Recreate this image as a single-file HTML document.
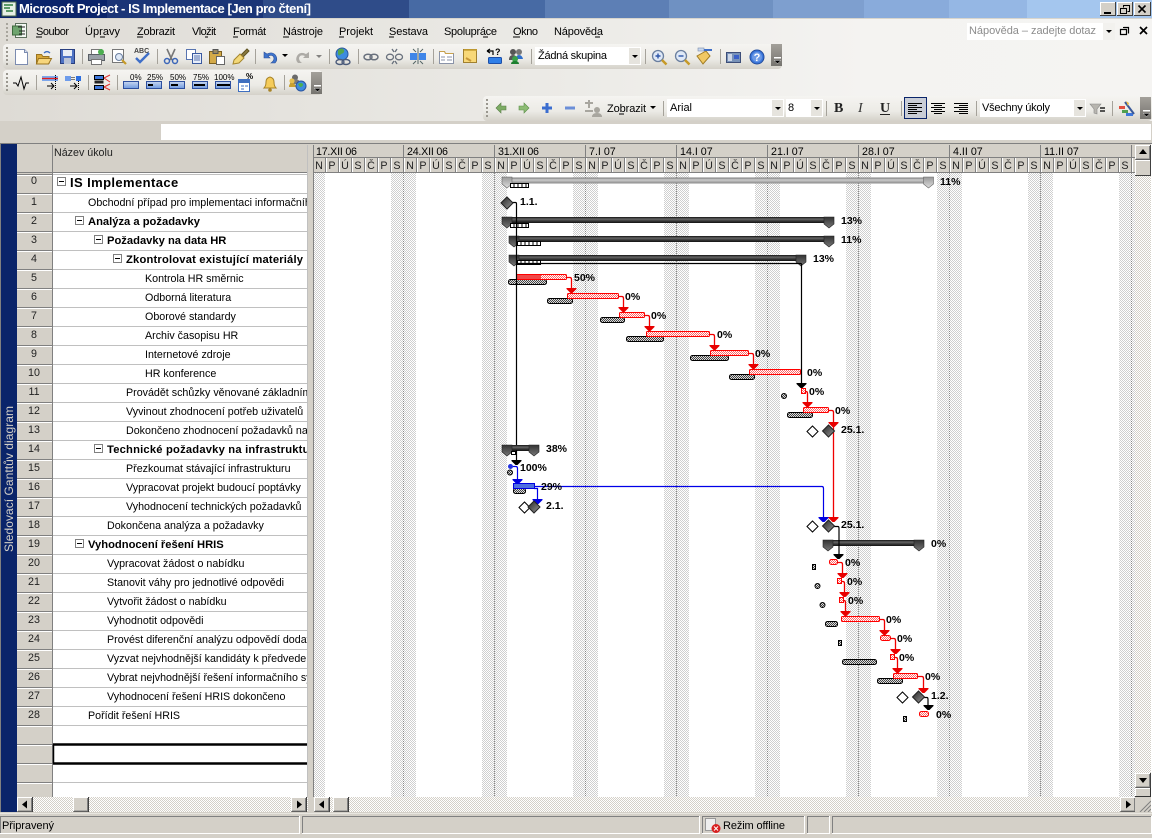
<!DOCTYPE html>
<html><head><meta charset="utf-8"><title>Microsoft Project</title>
<style>
html,body{margin:0;padding:0;background:#d4d0c8;overflow:hidden}
svg{display:block}
text{font-family:"Liberation Sans",sans-serif;font-size:10.7px;fill:#000;white-space:pre}
.m{font-size:11px}
.n{text-anchor:middle;fill:#222}
.bd{font-weight:bold;font-size:11.2px}
.p{font-weight:bold;font-size:10.5px}
.r{fill:url(#rh);stroke:#f00}
.b{fill:url(#bh);stroke:#000}
.l{fill:none;stroke:#f00000;stroke-width:1.3}
.k{fill:none;stroke:#000;stroke-width:1.2}
.u{fill:none;stroke:#0000e8;stroke-width:1.2}
.s{stroke:#a5a29a;stroke-width:1}
</style></head><body>
<svg width="1152" height="838" viewBox="0 0 1152 838" xmlns="http://www.w3.org/2000/svg">
<defs>
<pattern id="wk" width="2" height="2" patternUnits="userSpaceOnUse"><rect width="2" height="2" fill="#fff"/><rect width="1" height="1" fill="#cfcfcf"/><rect x="1" y="1" width="1" height="1" fill="#cfcfcf"/></pattern>
<pattern id="tr" width="2" height="2" patternUnits="userSpaceOnUse"><rect width="2" height="2" fill="#fff"/><rect width="1" height="1" fill="#d4d0c8"/><rect x="1" y="1" width="1" height="1" fill="#d4d0c8"/></pattern>
<pattern id="rh" width="2" height="2" patternUnits="userSpaceOnUse"><rect width="2" height="2" fill="#fff"/><rect width="1" height="1" fill="#f66"/><rect x="1" y="1" width="1" height="1" fill="#f66"/></pattern>
<pattern id="bh" width="2" height="2" patternUnits="userSpaceOnUse"><rect width="2" height="2" fill="#ddd"/><rect width="1" height="1" fill="#444"/><rect x="1" y="1" width="1" height="1" fill="#444"/></pattern>
<pattern id="dy" x="312" width="13" height="14" patternUnits="userSpaceOnUse"><rect width="13" height="14" fill="#d4d0c8"/><rect width="1" height="14" fill="#808080"/><rect x="1" width="1" height="14" fill="#fff"/></pattern>
<pattern id="rw" y="175" width="10" height="19" patternUnits="userSpaceOnUse"><rect width="10" height="19" fill="#fff"/><rect y="18" width="10" height="1" fill="#c0c0c0"/></pattern>
<pattern id="rn" y="175" width="10" height="19" patternUnits="userSpaceOnUse"><rect width="10" height="19" fill="#d4d0c8"/><rect y="18" width="10" height="1" fill="#808080"/><rect y="0" width="10" height="1" fill="#fff"/></pattern>
<linearGradient id="dk" x1="0" y1="0" x2="0" y2="1"><stop offset="0" stop-color="#111"/><stop offset=".35" stop-color="#666"/><stop offset=".7" stop-color="#333"/><stop offset="1" stop-color="#111"/></linearGradient>
<linearGradient id="gy" x1="0" y1="0" x2="0" y2="1"><stop offset="0" stop-color="#777"/><stop offset=".4" stop-color="#ccc"/><stop offset="1" stop-color="#888"/></linearGradient>
<linearGradient id="cp" x1="0" y1="0" x2="0" y2="1"><stop offset="0" stop-color="#333"/><stop offset="1" stop-color="#777"/></linearGradient>
<linearGradient id="cg" x1="0" y1="0" x2="0" y2="1"><stop offset="0" stop-color="#999"/><stop offset="1" stop-color="#ddd"/></linearGradient>
<linearGradient id="dm" x1="0" y1="0" x2="1" y2="1"><stop offset="0" stop-color="#222"/><stop offset="1" stop-color="#999"/></linearGradient>
<linearGradient id="bg" x1="0" y1="0" x2="1" y2="0"><stop offset="0" stop-color="#dedbd5"/><stop offset=".5" stop-color="#ecebe7"/><stop offset=".75" stop-color="#f4f3f1"/><stop offset="1" stop-color="#f5f4f2"/></linearGradient>
<linearGradient id="pl" x1="0" y1="0" x2="0" y2="1"><stop offset="0" stop-color="#f5f4f1"/><stop offset=".6" stop-color="#ecebe6"/><stop offset="1" stop-color="#d4d1c9"/></linearGradient>
<linearGradient id="ch" x1="0" y1="0" x2="0" y2="1"><stop offset="0" stop-color="#a3a09a"/><stop offset="1" stop-color="#76746f"/></linearGradient>
<linearGradient id="pb" x1="0" y1="0" x2="0" y2="1"><stop offset="0" stop-color="#c9d8f0"/><stop offset="1" stop-color="#6f9ae0"/></linearGradient>
<g id="cap"><polygon points="0,0 10,0 10,7 5,11 0,7" fill="url(#cp)" stroke="#222" stroke-width=".6"/></g>
<g id="cg0"><polygon points="0,0 10,0 10,7 5,11 0,7" fill="url(#cg)" stroke="#666" stroke-width=".6"/></g>
<g id="ar"><polygon points="-5,0 5,0 5,1 1,5 -1,5 -5,1"/></g>
<g id="dd"><polygon points="-6,0 0,-6 6,0 0,6" fill="url(#dm)" stroke="#222"/></g>
<g id="wd"><polygon points="-5.5,0 0,-5.5 5.5,0 0,5.5" fill="#fff" stroke="#000"/></g>
<g id="ro"><rect x=".5" y=".5" width="18" height="4" fill="#fff" stroke="#000"/><path d="M4 1v3M8 1v3M12 1v3M16 1v3" stroke="#000"/></g>
<g id="ro2"><rect x=".5" y=".5" width="23" height="4" fill="#fff" stroke="#000"/><path d="M4 1v3M8 1v3M12 1v3M16 1v3M20 1v3" stroke="#000"/></g>
<g id="mn"><rect x=".5" y=".5" width="8" height="8" fill="#fff" stroke="#808080"/><path d="M2 4.5h5" stroke="#000"/></g>
<g id="bt"><rect width="16" height="15" fill="#d4d0c8"/><path d="M.5 14V.5H15" stroke="#fff" fill="none"/><path d="M15.5 0V15H0" stroke="#404040" fill="none"/><path d="M14.5 1V14H1" stroke="#808080" fill="none"/></g>
<g id="gr"><path d="M0 0h2v2H0zM0 4h2v2H0zM0 8h2v2H0zM0 12h2v2H0zM0 16h2v2H0z" fill="#9a978f"/></g>
<g id="pc"><rect x="0" y="0" width="11" height="22" fill="url(#ch)"/><rect x="3" y="13" width="7" height="1.5" fill="#fff"/><polygon points="3,16 10,16 6.5,20" fill="#fff"/><polygon points="3.5,16.5 9.5,16.5 6.5,19.5" fill="#000"/></g>
<g id="dn"><polygon points="0,0 6,0 3,3" fill="#000"/></g>
<g id="mg"><circle cx="7" cy="7" r="5.5" fill="#dfe9f7" stroke="#6a7f9f" stroke-width="1.3"/><path d="M11 11l4.500 4.500" stroke="#c69a28" stroke-width="2.500"/></g>
<g id="pg"><rect x="1.500" y="5.500" width="15" height="7" fill="url(#pb)" stroke="#2d4f9e"/></g>
</defs>

<!-- background -->
<rect width="1152" height="838" fill="#d4d0c8"/>
<rect y="18" width="1152" height="103" fill="url(#bg)"/>
<rect y="18" width="1152" height="1" fill="#d8d5cd"/>

<!-- title -->
<rect x="0" width="107" height="18" fill="#0a246a"/>
<rect x="107" width="156" height="18" fill="#1b3577"/>
<rect x="263" width="146" height="18" fill="#2f4c89"/>
<rect x="409" width="136" height="18" fill="#476aa4"/>
<rect x="545" width="124" height="18" fill="#5d7fb5"/>
<rect x="669" width="104" height="18" fill="#6f91c2"/>
<rect x="773" width="91" height="18" fill="#7e9fcf"/>
<rect x="864" width="85" height="18" fill="#89abdb"/>
<rect x="949" width="78" height="18" fill="#95b7e4"/>
<rect x="1027" width="125" height="18" fill="#a4c6ee"/>
<rect x="2" y="2" width="14" height="14" fill="#e6efe6" stroke="#4a6a4a"/><path d="M4 5h9M4 8h6M6 11h7" stroke="#2f7f3f" stroke-width="1.500"/>
<text x="19" y="13" class="bd" style="font-size:13px;fill:#fff" textLength="292" lengthAdjust="spacing">Microsoft Project - IS Implementace [Jen pro čtení]</text>
<g transform="translate(1100,2)"><rect width="16" height="14" fill="#d4d0c8"/><path d="M.5 14V.5H16" stroke="#fff" fill="none"/><path d="M15.500 0V13.500H0" stroke="#404040" fill="none"/><rect x="4" y="10" width="7" height="2" fill="#000"/></g>
<g transform="translate(1117,2)"><rect width="16" height="14" fill="#d4d0c8"/><path d="M.5 14V.5H16" stroke="#fff" fill="none"/><path d="M15.500 0V13.500H0" stroke="#404040" fill="none"/><path d="M6.500 3.500h6v6h-2M6.500 3.500v2" fill="none" stroke="#000"/><path d="M3.500 6.500h6v5h-6z" fill="none" stroke="#000"/><path d="M6 3.500h7M3 6.500h7" stroke="#000"/></g>
<g transform="translate(1134,2)"><rect width="17" height="14" fill="#d4d0c8"/><path d="M.5 14V.5H17" stroke="#fff" fill="none"/><path d="M16.500 0V13.500H0" stroke="#404040" fill="none"/><path d="M4.500 3.500l7 7M11.500 3.500l-7 7" stroke="#000" stroke-width="1.600"/></g>

<!-- menu -->
<use href="#gr" x="6" y="23" opacity=".8"/>
<g transform="translate(12,23)"><rect x="3.500" y=".5" width="11" height="14" fill="#f4f8f4" stroke="#5d6f5d"/><rect x=".5" y="3" width="9" height="9" fill="#6ea46e" stroke="#3d6a3d"/><path d="M6 4h7M7 8h6M7 11h6" stroke="#222"/></g>
<text class="m" x="36" y="35" textLength="33" lengthAdjust="spacing">Soubor</text>
<text class="m" x="85" y="35" textLength="35" lengthAdjust="spacing">Úpravy</text>
<text class="m" x="137" y="35" textLength="38" lengthAdjust="spacing">Zobrazit</text>
<text class="m" x="192" y="35" textLength="24" lengthAdjust="spacing">Vložit</text>
<text class="m" x="233" y="35" textLength="33" lengthAdjust="spacing">Formát</text>
<text class="m" x="283" y="35" textLength="40" lengthAdjust="spacing">Nástroje</text>
<text class="m" x="339" y="35" textLength="34" lengthAdjust="spacing">Projekt</text>
<text class="m" x="389" y="35" textLength="39" lengthAdjust="spacing">Sestava</text>
<text class="m" x="444" y="35" textLength="53" lengthAdjust="spacing">Spolupráce</text>
<text class="m" x="513" y="35" textLength="25" lengthAdjust="spacing">Okno</text>
<text class="m" x="554" y="35" textLength="49" lengthAdjust="spacing">Nápověda</text>
<path d="M36 37h6M100 37h5M137 37h6M205 37h3M233 37h5M283 37h6M339 37h5M389 37h5M483 37h5M513 37h7M595 37h5" stroke="#000"/>
<rect x="967" y="23" width="148" height="17" fill="#fff"/>
<text class="m" x="969" y="34" style="fill:#8c8c8c" textLength="127" lengthAdjust="spacing">Nápověda – zadejte dotaz</text>
<rect x="1103" y="23" width="12" height="17" fill="#f2f1ee"/>
<use href="#dn" x="1106" y="30"/>
<path d="M1123.500 27.500h5v6M1120.500 29.500h6v5h-6z" fill="none" stroke="#000" stroke-width="1.200"/><path d="M1123 27.500h6M1120 29.500h7" stroke="#000"/>
<path d="M1140 27l7 7M1147 27l-7 7" stroke="#000" stroke-width="1.700"/>

<!-- toolbar 1 -->
<rect x="3" y="44" width="779" height="25" rx="4" fill="url(#pl)"/>
<use href="#pc" x="771" y="44"/>
<use href="#gr" x="6" y="47"/>
<path class="s" d="M82.500 49v15M157.500 49v15M255.500 49v15M329.500 49v15M358.500 49v15M433.500 49v15M531.500 49v15M645.500 49v15M720.500 49v15"/>
<g transform="translate(13,49)"><path d="M2.500 .5h9l3 3v12h-12z" fill="#fff" stroke="#7c8cb0"/><path d="M11.500 .5v3h3" fill="#dbe4f4" stroke="#7c8cb0"/></g>
<g transform="translate(35,49)"><path d="M1.500 5.500h5l1.500 2h6v7h-12.500z" fill="#d8a838" stroke="#9a7420"/><path d="M3.500 9.500h13l-3 5.500h-12z" fill="#f7d67c" stroke="#9a7420"/><path d="M9 4q3-3 6 0" fill="none" stroke="#3f6fc0" stroke-width="1.300"/></g>
<g transform="translate(60,49)"><rect x=".5" y=".5" width="14" height="14" fill="#4f73c4" stroke="#2a3f80"/><rect x="3" y="1" width="9" height="6" fill="#e8edf5"/><rect x="4" y="9" width="7" height="6" fill="#bcc4d6"/></g>
<g transform="translate(88,49)"><rect x="3.500" y=".5" width="10" height="5" fill="#fff" stroke="#777"/><rect x=".5" y="5.500" width="16" height="6" fill="#9aa1a8" stroke="#5a5f66"/><rect x="3.500" y="10.500" width="10" height="5" fill="#fff" stroke="#777"/><circle cx="13" cy="3" r="3" fill="#4caf50"/></g>
<g transform="translate(112,49)"><rect x=".5" y=".5" width="11" height="13" fill="#fff" stroke="#777"/><circle cx="7" cy="8" r="3.500" fill="#dfe9f7" stroke="#6a7f9f"/><path d="M10 11l4 4" stroke="#c69a28" stroke-width="2.200"/></g>
<g transform="translate(134,47)"><text x="0" y="6" style="font-size:7px;font-weight:bold;fill:#444">ABC</text><path d="M2 11l4 4 9-9" fill="none" stroke="#3f6fc8" stroke-width="2.400"/></g>
<g transform="translate(163,48)"><path d="M4 1l5 11M12 1l-5 11" stroke="#777" stroke-width="1.600"/><circle cx="4" cy="13" r="2.500" fill="none" stroke="#3a65b8" stroke-width="1.500"/><circle cx="12" cy="13" r="2.500" fill="none" stroke="#3a65b8" stroke-width="1.500"/></g>
<g transform="translate(186,49)"><rect x=".5" y=".5" width="9" height="10" fill="#fff" stroke="#5874b0"/><rect x="6.500" y="4.500" width="9" height="10" fill="#e7eefa" stroke="#3a5aa0"/><path d="M8 7h6M8 9h6M8 11h6" stroke="#5874b0"/></g>
<g transform="translate(209,49)"><rect x=".5" y="2.500" width="12" height="12" fill="#d4aa48" stroke="#7c6020"/><rect x="4" y=".5" width="5" height="4" fill="#9a8a60" stroke="#555"/><rect x="7.500" y="7.500" width="8" height="8" fill="#fff" stroke="#666"/></g>
<g transform="translate(232,48)"><path d="M9 7l6-6 2 2-6 6z" fill="#8a7a40" stroke="#5f5320"/><path d="M2 12l6-6 4 4-5 5-6 1z" fill="#f3d878" stroke="#a5862c"/></g>
<g transform="translate(262,49)"><path d="M2 3l0 6 6 0-2-2q5-2 6 2q0 3-3 5h4q3-3 1-7q-3-5-9-2z" fill="#3f74cc" stroke="#2a4f98" stroke-width=".6"/></g>
<use href="#dn" x="282" y="54"/>
<g transform="translate(295,49)"><path d="M14 3l0 6-6 0 2-2q-5-2-6 2q0 3 3 5h-4q-3-3-1-7q3-5 9-2z" fill="#adaba6"/></g>
<use href="#dn" x="316" y="55" opacity=".45"/>
<g transform="translate(335,47)"><circle cx="7" cy="7" r="6" fill="#3d8be0" stroke="#2a55a0"/><path d="M3 3q4-3 6 0q1 3-3 4q-2 3-3 0z" fill="#52a552"/><ellipse cx="5" cy="15" rx="4" ry="2.500" fill="none" stroke="#4a5a7a" stroke-width="1.400"/><ellipse cx="11" cy="15" rx="4" ry="2.500" fill="none" stroke="#4a5a7a" stroke-width="1.400"/></g>
<g transform="translate(363,52)" fill="none" stroke="#68707c" stroke-width="1.500"><ellipse cx="5" cy="5" rx="4" ry="2.800"/><ellipse cx="11" cy="5" rx="4" ry="2.800"/></g>
<g transform="translate(387,48)" fill="none" stroke="#68707c" stroke-width="1.300"><ellipse cx="3" cy="9" rx="3.500" ry="2.800"/><ellipse cx="12" cy="9" rx="3.500" ry="2.800"/><path d="M5 1l2 3M10 1l-2 3M5 16l2-3M10 16l-2-3"/></g>
<g transform="translate(410,48)"><rect x="0" y="5" width="7" height="7" fill="#3f86e8"/><rect x="9" y="5" width="7" height="7" fill="#3f86e8"/><path d="M3 1l3 3M13 1l-3 3M3 16l3-3M13 16l-3-3M8 0v16" stroke="#566" fill="none"/></g>
<g transform="translate(439,49)"><path d="M.5 2.500h5l1 2h8v10H.5z" fill="#fff" stroke="#8a93a8"/><path d="M.5 2.500h5l1 2h8" fill="none" stroke="#c9a24c"/><path d="M2 8h4M8 8h5M2 11h4M8 11h5" stroke="#8a93a8"/></g>
<g transform="translate(463,49)"><rect x=".5" y=".5" width="13" height="13" fill="#f8d878" stroke="#a08030"/><path d="M1 1h13" stroke="#c8a030" stroke-width="1.500"/><path d="M3 9l5 3" stroke="#c89838" stroke-width="2"/></g>
<g transform="translate(486,47)"><rect x="2.500" y="10.500" width="13" height="6" rx="1" fill="#2f7fe8" stroke="#1c4fa8"/><path d="M1 4h6v4M1 4l3-2M1 4l3 2" fill="none" stroke="#000" stroke-width="1.200"/><text x="9" y="8" style="font-size:9px;font-weight:bold">?</text></g>
<g transform="translate(508,48)"><circle cx="5" cy="4" r="3" fill="#555"/><path d="M1 12q0-5 4-5t4 5z" fill="#555"/><circle cx="11" cy="4" r="3" fill="#777"/><path d="M8 11q0-4 3-4t4 4z" fill="#2d6fcc"/><circle cx="7" cy="11" r="3" fill="#3aa04a"/><path d="M3 16q0-3 4-3t4 3z" fill="#1d7f2f"/></g>
<rect x="535" y="47" width="106" height="18" fill="#fff"/>
<rect x="629" y="48" width="11" height="16" fill="#e6e4de"/><use href="#dn" x="632" y="55"/>
<text class="m" x="538" y="59" textLength="69" lengthAdjust="spacing">Žádná skupina</text>
<g transform="translate(651,49)"><use href="#mg"/><path d="M4.500 7h5M7 4.500v5" stroke="#2d55a8" stroke-width="1.400"/></g>
<g transform="translate(674,49)"><use href="#mg"/><path d="M4.500 7h5" stroke="#2d55a8" stroke-width="1.400"/></g>
<g transform="translate(697,48)"><path d="M0 8l9-5 4 5-7 8z" fill="#f0c864" stroke="#a07c24"/><rect x="1" y="0" width="6" height="3" fill="#c8d8f0" stroke="#7a8aa8" stroke-width=".6"/><path d="M7 2h8" stroke="#3f6fc8" stroke-width="2"/></g>
<g transform="translate(726,50)"><rect x=".5" y="2.500" width="14" height="10" fill="#7892b8" stroke="#3d4e78"/><rect x="8" y="5" width="5" height="4" fill="#3a60c8"/><rect x="2" y="4" width="4" height="7" fill="#cdd6e6"/></g>
<g transform="translate(749,49)"><circle cx="8" cy="8" r="7" fill="#3c78dc" stroke="#234c9c"/><circle cx="8" cy="8" r="5" fill="#fff" opacity=".25"/><text x="8" y="12" style="font-size:11px;font-weight:bold;fill:#fff;text-anchor:middle">?</text></g>

<!-- toolbar 2 -->
<rect x="3" y="70" width="319" height="25" rx="4" fill="url(#pl)"/>
<use href="#pc" x="311" y="72"/>
<use href="#gr" x="6" y="73"/>
<path class="s" d="M36.500 75v15M88.500 75v15M117.500 75v15M284.500 75v15"/>
<path d="M13 83h3l2 3 3-9 3 12 2-6h3" fill="none" stroke="#000"/>
<g transform="translate(42,75)"><rect x="0" y="1" width="16" height="5" fill="#7ca7ec"/><path d="M0 3.500h16" stroke="#e02020" stroke-width="1.300"/><path d="M5 11h7M9 8l3 3-3 3" fill="none" stroke="#000"/><path d="M13.500 0v16" stroke="#000" stroke-dasharray="1 1"/></g>
<g transform="translate(65,75)"><path d="M0 1h6v5H0z" fill="#6e9ceb"/><path d="M11 1h5v5h-5z" fill="#2e6fe0"/><path d="M7 2v4M9 2v4" stroke="#000" stroke-dasharray="1 1"/><path d="M5 11h7M9 8l3 3-3 3" fill="none" stroke="#000"/><path d="M13.500 6v10" stroke="#000" stroke-dasharray="1 1"/></g>
<g transform="translate(94,75)"><rect x=".5" y=".5" width="9" height="4" fill="#3f78dc" stroke="#000"/><rect x=".5" y="5.500" width="9" height="3" fill="#222"/><rect x=".5" y="10.500" width="9" height="4" fill="#3f78dc" stroke="#000"/><path d="M10 3l6-3M10 3l6 4M10 12l6-3M10 12l6 3" stroke="#e03030" fill="none"/></g>
<g transform="translate(122,76)"><use href="#pg"/><text x="8" y="4" style="font-size:8px">0%</text></g>
<g transform="translate(145,76)"><use href="#pg"/><rect x="3" y="8" width="5" height="2" fill="#000"/><text x="2" y="4" style="font-size:8px">25%</text></g>
<g transform="translate(168,76)"><use href="#pg"/><rect x="3" y="8" width="7" height="2" fill="#000"/><text x="2" y="4" style="font-size:8px">50%</text></g>
<g transform="translate(191,76)"><use href="#pg"/><rect x="3" y="8" width="11" height="2" fill="#000"/><text x="2" y="4" style="font-size:8px">75%</text></g>
<g transform="translate(214,76)"><use href="#pg"/><rect x="3" y="8" width="13" height="2" fill="#000"/><text x="0" y="4" style="font-size:8px">100%</text></g>
<g transform="translate(238,74)"><rect x=".5" y="5.500" width="11" height="12" fill="#fff" stroke="#3f6fc0"/><rect x="1" y="6" width="10" height="3" fill="#3f6fc0"/><path d="M3 12h3M7 12h3M3 15h3" stroke="#3f6fc0"/><text x="8" y="5" style="font-size:8px;font-weight:bold">%</text></g>
<g transform="translate(262,76)"><path d="M2 12q2-2 2-6t4-5q4 1 4 5t2 6z" fill="#f5cc5a" stroke="#a88428"/><circle cx="8" cy="14" r="1.800" fill="#a88428"/></g>
<g transform="translate(289,74)"><circle cx="6" cy="3.500" r="3" fill="#6a6a6a"/><path d="M1 10q0-5 5-5t5 5z" fill="#7a7a7a"/><circle cx="3" cy="7" r="2.600" fill="#e6c050"/><path d="M0 13q0-4 3-4t4 4z" fill="#c8a030"/><circle cx="12" cy="12" r="5" fill="#3d8be0" stroke="#2a55a0"/><path d="M9 10q3-2 5 0q0 3-3 3z" fill="#4caf50"/></g>

<!-- toolbar 3 -->
<rect x="483" y="96" width="669" height="25" rx="4" fill="url(#pl)"/>
<use href="#pc" x="1140" y="97"/>
<use href="#gr" x="486" y="99"/>
<path class="s" d="M663.500 101v15M826.500 101v15M901.500 101v15M976.500 101v15M1112.500 101v15"/>
<path d="M496 108l5-5v3h5v4h-5v3z" fill="#7dac64" stroke="#5a7f48" stroke-width=".6"/>
<path d="M529 108l-5-5v3h-5v4h5v3z" fill="#8dbc74" stroke="#5a8f48" stroke-width=".6"/>
<path d="M542 106.500h10v3h-10zM545.500 103h3v10h-3z" fill="#3b6ed0"/>
<rect x="565" y="106.500" width="10" height="3" fill="#6b8fd8"/>
<path d="M585 103h8M589 100v8M585 111h8" stroke="#a8a69f" stroke-width="2"/><circle cx="597" cy="110" r="3" fill="#a8a69f"/><path d="M592 117q0-4 5-4t5 4z" fill="#a8a69f"/>
<text class="m" x="607" y="112" textLength="39" lengthAdjust="spacing">Zobrazit</text><path d="M619 114h5" stroke="#000"/>
<use href="#dn" x="650" y="106"/>
<rect x="667" y="99" width="117" height="18" fill="#fff"/>
<rect x="772" y="100" width="11" height="16" fill="#e6e4de"/><use href="#dn" x="775" y="107"/>
<text class="m" x="670" y="111">Arial</text>
<rect x="786" y="99" width="37" height="18" fill="#fff"/>
<rect x="811" y="100" width="11" height="16" fill="#e6e4de"/><use href="#dn" x="814" y="107"/>
<text class="m" x="788" y="111">8</text>
<text x="834" y="112" style="font-family:'Liberation Serif',serif;font-size:14px;font-weight:bold;fill:#222">B</text>
<text x="858" y="112" style="font-family:'Liberation Serif',serif;font-size:14px;font-style:italic;fill:#333">I</text>
<text x="880" y="112" style="font-family:'Liberation Serif',serif;font-size:14px;font-weight:bold;fill:#222">U</text><path d="M880 114.500h10" stroke="#222"/>
<rect x="904.500" y="97.500" width="22" height="21" fill="#c9cdd6" stroke="#0a246a"/>
<path d="M908 103.500h14M908 105.500h9M908 107.500h14M908 109.500h9M908 111.500h14M908 113.500h9" stroke="#000"/>
<path d="M931 103.500h14M934 105.500h8M931 107.500h14M934 109.500h8M931 111.500h14M934 113.500h8" stroke="#000"/>
<path d="M954 103.500h14M959 105.500h9M954 107.500h14M959 109.500h9M954 111.500h14M959 113.500h9" stroke="#000"/>
<rect x="980" y="99" width="106" height="18" fill="#fff"/>
<rect x="1074" y="100" width="11" height="16" fill="#e6e4de"/><use href="#dn" x="1077" y="107"/>
<text class="m" x="982" y="111" textLength="68" lengthAdjust="spacing">Všechny úkoly</text>
<path d="M1090 104h11l-4 5v5l-3-1v-4z" fill="#b8b6b0" stroke="#888" stroke-width=".6"/><path d="M1100 108h5M1100 111h5" stroke="#222" stroke-width="1.500"/>
<g transform="translate(1119,100)"><rect x="0" y="6" width="6" height="3" fill="#e05040"/><rect x="3" y="10" width="6" height="3" fill="#50a050"/><rect x="7" y="13" width="7" height="3" fill="#3f78dc"/><path d="M6 2l9 12" stroke="#3a5a9a" stroke-width="2"/><path d="M7 1l3 2-1 3" fill="#f0c040"/></g>

<!-- entry bar -->
<rect x="0" y="121" width="1152" height="23" fill="#d4d0c8"/>
<rect x="161" y="124" width="990" height="16" fill="#fff"/>
<rect x="0" y="143" width="1152" height="1" fill="#808080"/>

<!-- side -->
<rect x="1" y="144" width="16" height="668" fill="#0a246a"/>
<text transform="translate(13,552) rotate(-90)" x="0" y="0" style="font-size:12px;fill:#d4d0c8" textLength="146" lengthAdjust="spacing">Sledovací Ganttův diagram</text>

<!-- table -->
<rect x="17" y="145" width="36" height="28" fill="#d4d0c8"/>
<rect x="17" y="173" width="36" height="624" fill="url(#rn)"/>
<rect x="52" y="145" width="1" height="652" fill="#808080"/>
<rect x="17" y="172" width="291" height="1" fill="#808080"/>
<rect x="53" y="173" width="254" height="624" fill="url(#rw)"/>
<rect x="53" y="145" width="255" height="27" fill="#d4d0c8"/>
<rect x="307" y="145" width="1" height="652" fill="#c0c0c0"/>
<rect x="308" y="145" width="6" height="667" fill="#d4d0c8"/>
<rect x="313" y="145" width="1" height="652" fill="#808080"/>
<text x="54" y="156" style="fill:#222">Název úkolu</text>

<text class="n" x="34" y="184">0</text><text class="n" x="34" y="205">1</text><text class="n" x="34" y="224">2</text><text class="n" x="34" y="243">3</text><text class="n" x="34" y="262">4</text><text class="n" x="34" y="281">5</text><text class="n" x="34" y="300">6</text><text class="n" x="34" y="319">7</text><text class="n" x="34" y="338">8</text><text class="n" x="34" y="357">9</text><text class="n" x="34" y="376">10</text><text class="n" x="34" y="395">11</text><text class="n" x="34" y="414">12</text><text class="n" x="34" y="433">13</text><text class="n" x="34" y="452">14</text><text class="n" x="34" y="471">15</text><text class="n" x="34" y="490">16</text><text class="n" x="34" y="509">17</text><text class="n" x="34" y="528">18</text><text class="n" x="34" y="547">19</text><text class="n" x="34" y="566">20</text><text class="n" x="34" y="585">21</text><text class="n" x="34" y="604">22</text><text class="n" x="34" y="623">23</text><text class="n" x="34" y="642">24</text><text class="n" x="34" y="661">25</text><text class="n" x="34" y="680">26</text><text class="n" x="34" y="699">27</text><text class="n" x="34" y="718">28</text>

<clipPath id="tc"><rect x="53" y="173" width="254" height="624"/></clipPath>
<g clip-path="url(#tc)">
<use href="#mn" x="57" y="177"/><use href="#mn" x="75" y="216"/><use href="#mn" x="94" y="235"/><use href="#mn" x="113" y="254"/><use href="#mn" x="94" y="444"/><use href="#mn" x="75" y="539"/>
<text x="70" y="187" class="bd" style="font-size:13px;letter-spacing:.4px">IS Implementace</text>
<text x="88" y="206">Obchodní případ pro implementaci informačního systému</text>
<text x="88" y="225" class="bd">Analýza a požadavky</text>
<text x="107" y="244" class="bd">Požadavky na data HR</text>
<text x="126" y="263" class="bd" textLength="177" lengthAdjust="spacing">Zkontrolovat existující materiály</text>
<text x="145" y="282">Kontrola HR směrnic</text>
<text x="145" y="301">Odborná literatura</text>
<text x="145" y="320">Oborové standardy</text>
<text x="145" y="339">Archiv časopisu HR</text>
<text x="145" y="358">Internetové zdroje</text>
<text x="145" y="377">HR konference</text>
<text x="126" y="396">Provádět schůzky věnované základním</text>
<text x="126" y="415">Vyvinout zhodnocení potřeb uživatelů</text>
<text x="126" y="434">Dokončeno zhodnocení požadavků na</text>
<text x="107" y="453" class="bd" style="letter-spacing:.2px">Technické požadavky na infrastrukturu</text>
<text x="126" y="472">Přezkoumat stávající infrastrukturu</text>
<text x="126" y="491">Vypracovat projekt budoucí poptávky</text>
<text x="126" y="510">Vyhodnocení technických požadavků</text>
<text x="107" y="529">Dokončena analýza a požadavky</text>
<text x="88" y="548" class="bd">Vyhodnocení řešení HRIS</text>
<text x="107" y="567">Vypracovat žádost o nabídku</text>
<text x="107" y="586">Stanovit váhy pro jednotlivé odpovědi</text>
<text x="107" y="605">Vytvořit žádost o nabídku</text>
<text x="107" y="624">Vyhodnotit odpovědi</text>
<text x="107" y="643">Provést diferenční analýzu odpovědí dodavatelů</text>
<text x="107" y="662">Vyzvat nejvhodnější kandidáty k předvedení</text>
<text x="107" y="681">Vybrat nejvhodnější řešení informačního systému</text>
<text x="107" y="700">Vyhodnocení řešení HRIS dokončeno</text>
<text x="88" y="719">Pořídit řešení HRIS</text>
</g>
<path d="M53 744.500h254M53 763.500h254" stroke="#000" stroke-width="2.400"/>
<path d="M53.500 744v20" stroke="#000" stroke-width="1.500"/>

<!-- gantt -->
<rect x="314" y="173" width="821" height="624" fill="#fff"/>
<g fill="url(#wk)">
<rect x="314" y="173" width="11" height="624"/><rect x="391" y="173" width="25" height="624"/><rect x="482" y="173" width="25" height="624"/><rect x="573" y="173" width="25" height="624"/><rect x="664" y="173" width="25" height="624"/><rect x="755" y="173" width="25" height="624"/><rect x="846" y="173" width="25" height="624"/><rect x="937" y="173" width="25" height="624"/><rect x="1028" y="173" width="25" height="624"/><rect x="1119" y="173" width="16" height="624"/>
</g>
<path d="M403.500 173v624M494.500 173v624M585.500 173v624M676.500 173v624M767.500 173v624M858.500 173v624M949.500 173v624M1040.500 173v624M1131.500 173v624" stroke="#888" stroke-dasharray="1 1"/>

<!-- gantt header -->
<rect x="314" y="145" width="821" height="13" fill="#d4d0c8"/>
<rect x="314" y="158" width="821" height="14" fill="url(#dy)"/>
<rect x="314" y="157" width="821" height="1" fill="#808080"/>
<rect x="314" y="172" width="821" height="1" fill="#808080"/>
<path d="M403.500 145v13M494.500 145v13M585.500 145v13M676.500 145v13M767.500 145v13M858.500 145v13M949.500 145v13M1040.500 145v13M1131.500 145v13" stroke="#808080"/>
<text x="316" y="155" textLength="41" lengthAdjust="spacing">17.XII 06</text><text x="407" y="155" textLength="41" lengthAdjust="spacing">24.XII 06</text><text x="498" y="155" textLength="41" lengthAdjust="spacing">31.XII 06</text><text x="589" y="155">7.I 07</text><text x="680" y="155">14.I 07</text><text x="771" y="155">21.I 07</text><text x="862" y="155">28.I 07</text><text x="953" y="155">4.II 07</text><text x="1044" y="155">11.II 07</text>
<text class="n" y="169" x="319 332 345 358 371 384 397 410 423 436 449 462 475 488 501 514 527 540 553 566 579 592 605 618 631 644 657 670 683 696 709 722 735 748 761 774 787 800 813 826 839 852 865 878 891 904 917 930 943 956 969 982 995 1008 1021 1034 1047 1060 1073 1086 1099 1112 1125">NPÚSČPSNPÚSČPSNPÚSČPSNPÚSČPSNPÚSČPSNPÚSČPSNPÚSČPSNPÚSČPSNPÚSČPS</text>

<!-- summary bars -->
<rect x="507" y="177.500" width="422" height="6" fill="url(#gy)"/><use href="#cg0" x="502" y="177"/><use href="#cg0" x="923.500" y="177"/>
<use href="#ro" x="510" y="183"/>
<rect x="507" y="217" width="322" height="6" fill="url(#dk)"/><use href="#cap" x="502" y="217"/><use href="#cap" x="824" y="217"/>
<use href="#ro" x="510" y="223"/>
<rect x="514" y="236" width="315" height="6" fill="url(#dk)"/><use href="#cap" x="509" y="236"/><use href="#cap" x="824" y="236"/>
<use href="#ro2" x="517" y="241"/>
<rect x="514" y="255" width="287" height="6" fill="url(#dk)"/><use href="#cap" x="509" y="255"/><use href="#cap" x="796" y="255"/>
<use href="#ro2" x="517" y="260"/>
<rect x="507" y="445" width="27" height="6" fill="url(#dk)"/><use href="#cap" x="502" y="445"/><use href="#cap" x="529" y="445"/>
<rect x="511.500" y="451.500" width="4" height="3" fill="#fff" stroke="#000"/>
<rect x="828" y="540" width="91" height="6" fill="url(#dk)"/><use href="#cap" x="823" y="540"/><use href="#cap" x="914" y="540"/>

<!-- baselines -->
<g>
<rect class="b" x="508.500" y="279.500" width="38" height="5" rx="2"/>
<rect class="b" x="547.500" y="298.500" width="25" height="5" rx="2"/>
<rect class="b" x="600.500" y="317.500" width="24" height="5" rx="2"/>
<rect class="b" x="626.500" y="336.500" width="37" height="5" rx="2"/>
<rect class="b" x="690.500" y="355.500" width="38" height="5" rx="2"/>
<rect class="b" x="729.500" y="374.500" width="25" height="5" rx="2"/>
<rect class="b" x="787.500" y="412.500" width="25" height="5" rx="2"/>
<rect class="b" x="513.500" y="488.500" width="12" height="5" rx="2"/>
<rect class="b" x="825.500" y="621.500" width="12" height="5" rx="2"/>
<rect class="b" x="842.500" y="659.500" width="34" height="5" rx="2"/>
<rect class="b" x="877.500" y="678.500" width="25" height="5" rx="2"/>
<circle class="b" cx="784" cy="396" r="2.500"/><circle class="b" cx="817.500" cy="586" r="2.500"/><circle class="b" cx="822.500" cy="605" r="2.500"/><circle class="b" cx="510" cy="472.500" r="2.500"/>
<rect class="b" x="812.500" y="564.500" width="3" height="5"/><rect class="b" x="838.500" y="640.500" width="3" height="5"/><rect class="b" x="903.500" y="716.500" width="3" height="5"/>
</g>

<!-- red tasks -->
<rect class="r" x="516.500" y="274.500" width="50" height="5" rx="1"/><rect x="517" y="275" width="24" height="4" fill="#f04848"/>
<rect class="r" x="567.500" y="293.500" width="51" height="5" rx="1"/>
<rect class="r" x="619.500" y="312.500" width="25" height="5" rx="1"/>
<rect class="r" x="646.500" y="331.500" width="63" height="5" rx="1"/>
<rect class="r" x="710.500" y="350.500" width="38" height="5" rx="1"/>
<rect class="r" x="749.500" y="369.500" width="51" height="5" rx="1"/>
<rect class="r" x="801.500" y="388.500" width="4" height="5"/>
<rect class="r" x="803.500" y="407.500" width="25" height="5" rx="1"/>
<rect class="r" x="829.500" y="559.500" width="8" height="5" rx="2"/>
<rect class="r" x="837.500" y="578.500" width="4" height="5"/>
<rect class="r" x="839.500" y="597.500" width="4" height="5"/>
<rect class="r" x="841.500" y="616.500" width="38" height="5" rx="1"/>
<rect class="r" x="880.500" y="635.500" width="10" height="5" rx="2"/>
<rect class="r" x="890.500" y="654.500" width="4" height="5"/>
<rect class="r" x="893.500" y="673.500" width="24" height="5" rx="1"/>
<rect class="r" x="919.500" y="711.500" width="9" height="5" rx="2"/>
<!-- blue tasks -->
<circle cx="510.500" cy="466.500" r="2.500" fill="#2030e0"/>
<rect x="513.500" y="483.500" width="21" height="5" fill="#5070e0" stroke="#0000e0"/>

<!-- links -->
<path class="k" d="M512 202.500h3.500q1 0 1 1.500V445"/>
<path class="k" d="M517 263.500h283.500q1 0 1 1V384"/>
<path class="k" d="M516.500 450v11"/>
<path class="u" d="M513 466.500h3q1.500 0 1.500 2V480"/>
<path class="u" d="M534 486.500h288q1.500 0 1.500 2V517"/>
<path class="u" d="M534 488.500h3.500v11"/>
<path class="l" d="M566 277.500h4q1.500 0 1.500 2V289"/>
<path class="l" d="M618 296.500h4q1.500 0 1.500 2V308"/>
<path class="l" d="M644 315.500h4q1.500 0 1.500 2V327"/>
<path class="l" d="M709 334.500h4q1.500 0 1.500 2V346"/>
<path class="l" d="M748 353.500h4q1.500 0 1.500 2V365"/>
<path class="l" d="M805 391.500h1q1.500 0 1.500 2V403"/>
<path class="l" d="M828 410.500h4q1.500 0 1.500 2V517"/>
<path class="l" d="M837 562.500h4q1.500 0 1.500 2V574"/>
<path class="l" d="M841 581.500h2q1.500 0 1.500 2V593"/>
<path class="l" d="M843 600.500h1q1.500 0 1.500 2V612"/>
<path class="l" d="M880 619.500h3q1.500 0 1.500 2V631"/>
<path class="l" d="M890 638.500h4q1.500 0 1.500 2V650"/>
<path class="l" d="M894 657.500h2q1.500 0 1.500 2V669"/>
<path class="l" d="M917 676.500h5q1.500 0 1.500 2V689"/>
<path class="k" d="M834 526.500h4q1 0 1 2V555"/>
<path class="k" d="M923 697.500h4q1 0 1 2V706"/>

<!-- arrows -->
<g fill="#e80000">
<use href="#ar" x="571.500" y="288"/><use href="#ar" x="623.500" y="307"/><use href="#ar" x="649.500" y="326"/><use href="#ar" x="714.500" y="345"/><use href="#ar" x="753.500" y="364"/><use href="#ar" x="807.500" y="402"/><use href="#ar" x="833.500" y="422"/><use href="#ar" x="833.500" y="517"/><use href="#ar" x="842.500" y="573"/><use href="#ar" x="844.500" y="592"/><use href="#ar" x="845.500" y="611"/><use href="#ar" x="884.500" y="630"/><use href="#ar" x="895.500" y="649"/><use href="#ar" x="897.500" y="668"/><use href="#ar" x="923.500" y="688"/>
</g>
<g fill="#000"><use href="#ar" x="801.500" y="383"/><use href="#ar" x="516.500" y="460"/><use href="#ar" x="838.500" y="554"/><use href="#ar" x="928.500" y="705"/></g>
<g fill="#0000e0"><use href="#ar" x="517.500" y="479"/><use href="#ar" x="537.500" y="499"/><use href="#ar" x="823.500" y="517"/></g>

<!-- milestones -->
<use href="#dd" x="507" y="203"/>
<use href="#wd" x="812.500" y="431.500"/><use href="#dd" x="828.500" y="431"/>
<use href="#wd" x="524.500" y="507.500"/><use href="#dd" x="534" y="507"/>
<use href="#wd" x="812.500" y="526.500"/><use href="#dd" x="828.500" y="526"/>
<use href="#wd" x="902.500" y="697.500"/><use href="#dd" x="918.500" y="697"/>

<!-- labels -->
<g>
<text class="p" x="940" y="185">11%</text><text class="p" x="520" y="205">1.1.</text><text class="p" x="841" y="224">13%</text><text class="p" x="841" y="243">11%</text><text class="p" x="813" y="262">13%</text>
<text class="p" x="574" y="281">50%</text><text class="p" x="625" y="300">0%</text><text class="p" x="651" y="319">0%</text><text class="p" x="717" y="338">0%</text><text class="p" x="755" y="357">0%</text><text class="p" x="807" y="376">0%</text><text class="p" x="809" y="395">0%</text><text class="p" x="835" y="414">0%</text><text class="p" x="841" y="433">25.1.</text>
<text class="p" x="546" y="452">38%</text><text class="p" x="520" y="471">100%</text><text class="p" x="541" y="490">29%</text><text class="p" x="546" y="509">2.1.</text><text class="p" x="841" y="528">25.1.</text><text class="p" x="931" y="547">0%</text>
<text class="p" x="845" y="566">0%</text><text class="p" x="847" y="585">0%</text><text class="p" x="848" y="604">0%</text><text class="p" x="886" y="623">0%</text><text class="p" x="897" y="642">0%</text><text class="p" x="899" y="661">0%</text><text class="p" x="925" y="680">0%</text><text class="p" x="931" y="699">1.2.</text><text class="p" x="936" y="718">0%</text>
</g>

<!-- scrollbars -->
<rect x="17" y="797" width="291" height="15" fill="url(#tr)"/>
<use href="#bt" x="17"  y="797"/><use href="#bt" x="73" y="797"/><use href="#bt" x="291" y="797"/>
<polygon points="22,804.500 27,800.500 27,808.500" fill="#000"/><polygon points="302,804.500 297,800.500 297,808.500" fill="#000"/>
<rect x="314" y="797" width="821" height="15" fill="url(#tr)"/>
<use href="#bt" x="314" y="797"/><use href="#bt" x="333" y="797"/><use href="#bt" x="1120" y="797"/>
<polygon points="319,804.500 324,800.500 324,808.500" fill="#000"/><polygon points="1131,804.500 1126,800.500 1126,808.500" fill="#000"/>
<rect x="1135" y="145" width="16" height="652" fill="url(#tr)"/>
<use href="#bt" x="1135" y="145"/><use href="#bt" x="1135" y="773"/>
<rect x="1135" y="788" width="16" height="8" fill="#d4d0c8"/><path d="M1135.500 796V788.500H1151" stroke="#fff" fill="none"/><path d="M1150.500 788V796.500H1135" stroke="#333" fill="none"/>
<rect x="1135" y="160" width="16" height="16" fill="#d4d0c8"/><path d="M1135.500 176V160.500H1151" stroke="#fff" fill="none"/><path d="M1150.500 160V175.500H1135" stroke="#404040" fill="none"/>
<polygon points="1143,149 1139,154 1147,154" fill="#000"/><polygon points="1143,783 1139,778 1147,778" fill="#000"/>
<rect x="1135" y="797" width="16" height="15" fill="#d4d0c8"/>
<path d="M1140 812l11-11M1144 812l7-7M1148 812l3-3" stroke="#808080"/>
<rect x="0" y="144" width="1" height="668" fill="#808080"/>
<rect x="1151" y="144" width="1" height="668" fill="#fff"/>

<!-- status -->
<rect x="0" y="812" width="1152" height="26" fill="#d4d0c8"/>
<rect x="0" y="813" width="1152" height="1" fill="#e8e6e0"/>
<g fill="none" stroke-width="1">
<path d="M.5 833V816.500H299" stroke="#808080"/><path d="M299.500 816V833.500H0" stroke="#fff"/>
<path d="M302.500 833V816.500H699" stroke="#808080"/><path d="M699.500 816V833.500H302" stroke="#fff"/>
<path d="M702.500 833V816.500H804" stroke="#808080"/><path d="M804.500 816V833.500H702" stroke="#fff"/>
<path d="M807.500 833V816.500H829" stroke="#808080"/><path d="M829.500 816V833.500H807" stroke="#fff"/>
<path d="M832.500 833V816.500H1151" stroke="#808080"/><path d="M1151.500 816V833.500H832" stroke="#fff"/>
</g>
<text class="m" x="2" y="829" textLength="52" lengthAdjust="spacing">Připravený</text>
<g transform="translate(705,818)"><rect x=".5" y=".5" width="10" height="12" fill="#eee" stroke="#999"/><circle cx="11" cy="10.500" r="4.500" fill="#d82020"/><path d="M9 8.500l4 4M13 8.500l-4 4" stroke="#fff"/></g>
<text class="m" x="723" y="829" textLength="62" lengthAdjust="spacing">Režim offline</text>
</svg>
</body></html>
